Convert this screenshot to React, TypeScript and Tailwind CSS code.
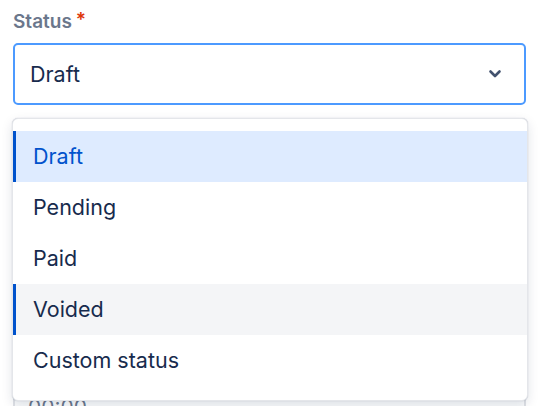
import React from "react";

const items = [
  { label: "Draft", state: "selected" },
  { label: "Pending", state: "" },
  { label: "Paid", state: "" },
  { label: "Voided", state: "focused" },
  { label: "Custom status", state: "" },
];

export default function App() {
  return (
    <div
      className="relative w-[544px] h-[406px] overflow-hidden bg-white"
      style={{ fontFamily: "Inter, 'Noto Sans', sans-serif" }}
    >
      <div className="flex flex-col pl-[13px] pt-[10px] w-[526px]">
        <div className="flex items-start h-[24px]">
          <span className="text-[19px] leading-[24px] font-semibold text-[#6b778c]">Status</span>
          <span className="ml-[4px] text-[19px] leading-[20px] font-semibold text-[#de350b]">*</span>
        </div>
        <div className="mt-[9px] h-[62px] flex items-center justify-between rounded-[5px] border-2 border-[#4c9aff] bg-white pl-[15px] pr-[22px]">
          <span className="text-[21.5px] text-[#172b4d]">Draft</span>
          <svg width="14" height="10" viewBox="0 0 14 10">
            <path d="M2.5 2.5 L7 7 L11.5 2.5" fill="none" stroke="#42526e" strokeWidth="2.6" strokeLinecap="round" strokeLinejoin="round" />
          </svg>
        </div>
        <div className="mt-[14px] h-[300px] flex flex-col justify-end">
          <div className="h-[40px] rounded-[5px] border-2 border-[#dfe1e6] bg-[#fafbfc] pl-[13px] pt-[13px]">
            <span className="text-[21px] leading-[28px] text-[#6b778c]">00:00</span>
          </div>
        </div>
      </div>

      <div className="absolute left-[12px] top-[118px] w-[516px] rounded-[6px] border border-[#e4e6ea] bg-white pt-[12px] pb-[14px] shadow-[0_4px_12px_rgba(9,30,66,0.12),0_0_1px_rgba(9,30,66,0.3)]">
        {items.map((it) => (
          <div
            key={it.label}
            className={
              "h-[51px] flex items-center pl-[17px] border-l-[3px] text-[21.5px] " +
              (it.state === "selected"
                ? "bg-[#deebff] border-[#0052cc] text-[#0052cc]"
                : it.state === "focused"
                ? "bg-[#f4f5f7] border-[#0052cc] text-[#172b4d]"
                : "border-transparent text-[#172b4d]")
            }
          >
            {it.label}
          </div>
        ))}
      </div>
    </div>
  );
}
